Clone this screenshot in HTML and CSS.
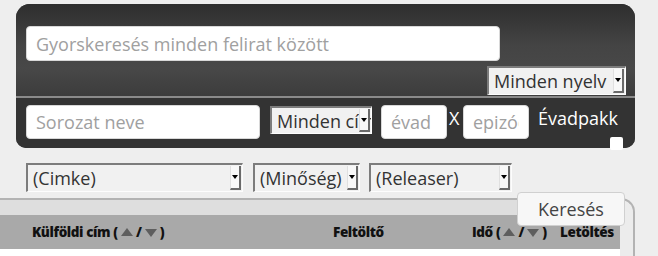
FILE: index.html
```html
<!DOCTYPE html>
<html lang="hu">
<head>
<meta charset="utf-8">
<title>Keresés</title>
<link rel="stylesheet" href="styles.css">
</head>
<body>
<div class="panel">
  <div class="panel-top">
    <input class="field field-quick" type="text" placeholder="Gyorskeresés minden felirat között">
    <div class="lang-row">
      <span class="sel sel-lang"><select><option>Minden nyelv</option></select><span class="sel-arrow"></span></span>
    </div>
  </div>
  <div class="panel-bottom">
    <input class="field field-series" type="text" placeholder="Sorozat neve">
    <span class="sel sel-title"><select><option>Minden címke</option></select><span class="sel-arrow"></span></span>
    <input class="field field-num" type="text" placeholder="évad">
    <span class="x-sep">X</span>
    <input class="field field-num" type="text" placeholder="epizód">
    <label class="pack">Évadpakk</label>
    <span class="check"></span>
  </div>
</div>

<div class="filters">
  <span class="sel sel-tag"><select><option>(Cimke)</option></select><span class="sel-arrow"></span></span>
  <span class="sel sel-quality"><select><option>(Minőség)</option></select><span class="sel-arrow"></span></span>
  <span class="sel sel-release"><select><option>(Releaser)</option></select><span class="sel-arrow"></span></span>
</div>

<div class="results">
  <button class="search-btn" type="button">Keresés</button>
  <div class="table">
    <div class="band"></div>
    <div class="thead">
      <span>Külföldi cím ( <i class="tri up"></i> / <i class="tri down"></i> )</span>
      <span>Feltöltő</span>
      <span>Idő ( <i class="tri up"></i> / <i class="tri down"></i> )</span>
      <span>Letöltés</span>
    </div>
    <div class="tbody"></div>
  </div>
</div>
</body>
</html>
```

FILE: styles.css
```css
* { box-sizing: border-box; }

html, body { height: 256px; }

body {
  margin: 0;
  background: #eeeeee;
  font-family: "Open Sans", "Noto Sans", sans-serif;
  overflow: hidden;
}

.panel {
  position: relative;
  margin: 4px 0 0 16px;
  width: 619px;
  border-radius: 14px 14px 10px 10px;
  background: #333;
}

.panel-top {
  height: 94px;
  padding: 22px 9px 0 10px;
  border-radius: 14px 14px 0 0;
  background: linear-gradient(#2e2e2e 0%, #444 45%, #484848 70%, #3c3c3c 100%);
  border-bottom: 2px solid #8a8a8a;
}

.field {
  display: block;
  height: 35px;
  border: 1px solid #d8d8d8;
  border-radius: 4px;
  background: #fff;
  font-family: inherit;
  font-size: 18px;
  color: #333;
  padding: 0 9px;
  outline: none;
}
.field::placeholder { color: #a0a0a0; }

.field-quick { width: 474px; }

.lang-row {
  display: flex;
  justify-content: flex-end;
  margin-top: 5px;
}

.sel {
  position: relative;
  display: inline-block;
  height: 29px;
}
.sel select {
  appearance: none;
  -webkit-appearance: none;
  width: 100%;
  height: 100%;
  margin: 0;
  border-top: 2px solid #7c7c7c;
  border-left: 2px solid #7c7c7c;
  border-right: 1px solid #fdfdfd;
  border-bottom: 1px solid #fdfdfd;
  border-radius: 0;
  background: #f1f1f1;
  color: #333;
  font-family: inherit;
  font-size: 18px;
  padding: 0 0 0 5px;
  line-height: 26px;
  outline: none;
}
.sel-arrow {
  position: absolute;
  top: 3px;
  bottom: 2px;
  right: 2px;
  width: 11px;
  background: #f8f8f8;
  border-right: 2px solid #6a6a6a;
  border-bottom: 2px solid #6a6a6a;
  border-left: 1px solid #e0e0e0;
}
.sel-arrow::after {
  content: "";
  position: absolute;
  left: 1px;
  top: 50%;
  margin-top: -2px;
  border-left: 3.5px solid transparent;
  border-right: 3.5px solid transparent;
  border-top: 4px solid #000;
}

.sel-lang { width: 139px; }

.panel-bottom {
  position: relative;
  display: flex;
  align-items: flex-start;
  height: 50px;
  padding: 7px 10px 0 10px;
  border-radius: 0 0 10px 10px;
  background: #333;
}

.field-series { width: 234px; height: 34px; }
.sel-title { width: 102px; height: 28px; margin: 1px 0 0 10px; }
.field-num { width: 66px; height: 34px; }
.sel-title + .field-num { margin-left: 9px; }
.x-sep {
  color: #fff;
  font-size: 18px;
  width: 16px;
  padding-left: 2px;
  line-height: 26px;
}
.pack {
  color: #fff;
  font-size: 18px;
  margin-left: 9px;
  line-height: 24px;
  margin-top: 1px;
}
.check {
  position: absolute;
  right: 12px;
  bottom: -2px;
  width: 13px;
  height: 13px;
  background: #fff;
  border-radius: 2px;
}

.filters {
  display: flex;
  padding-left: 26px;
  margin-top: 15px;
  height: 29px;
}
.sel-tag { width: 217px; }
.sel-quality { width: 107px; margin-left: 10px; }
.sel-release { width: 143px; margin-left: 9px; }

.results {
  position: relative;
  margin: 6px 0 0 -10px;
  width: 645px;
  height: 58px;
  border-top: 2px solid #b3b3b3;
  border-right: 2px solid #b3b3b3;
  border-radius: 0 14px 0 0;
  background: #ececec;
}

.search-btn {
  position: absolute;
  top: -8px;
  right: 8px;
  width: 108px;
  height: 34px;
  border: 1px solid #d0d0d0;
  border-radius: 4px;
  background: #f7f7f7;
  color: #444;
  font-family: inherit;
  font-size: 18px;
  padding: 0;
  z-index: 2;
}

.table {
  width: 630px;
}
.band {
  height: 15px;
  background: #dedede;
}
.thead {
  display: grid;
  grid-template-columns: 301px 139px 88px auto;
  align-items: center;
  height: 34px;
  padding-left: 42px;
  background: #a9a9a9;
  font-size: 13.5px;
  font-weight: 800;
  color: #111;
  letter-spacing: -0.4px;
  white-space: nowrap;
}
.tri {
  display: inline-block;
  width: 0;
  height: 0;
  border-left: 6px solid transparent;
  border-right: 6px solid transparent;
  vertical-align: 1px;
}
.tri.up { border-bottom: 8px solid #5e5e5e; }
.tri.down { border-top: 8px solid #5e5e5e; vertical-align: 0; }
.tbody {
  height: 7px;
  background: #fff;
}
```
